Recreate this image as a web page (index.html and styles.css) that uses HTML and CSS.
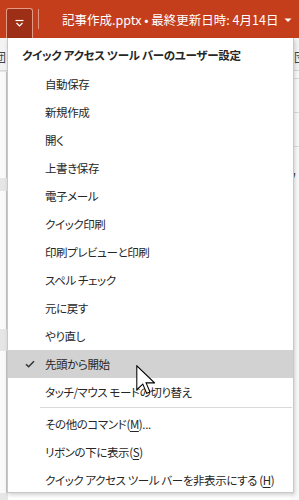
FILE: index.html
```html
<!DOCTYPE html>
<html lang="ja">
<head>
<meta charset="utf-8">
<link rel="stylesheet" href="styles.css">
</head>
<body>
<div class="app">
  <header class="titlebar">
    <div class="qat-btn">
      <svg width="11" height="8" viewBox="0 0 11 8"><path d="M1.5 1.5h8" stroke="#fff" stroke-width="1.2"/><path d="M2.5 4l3 3 3-3" fill="none" stroke="#fff" stroke-width="1.2"/></svg>
    </div>
    <div class="tb-sep"></div>
    <div class="doc-title">記事作成.pptx • 最終更新日時: 4月14日</div>
    <svg class="tb-caret" width="8" height="5" viewBox="0 0 8 5"><path d="M0.5 0.5l3.5 3.5 3.5-3.5z" fill="#fff"/></svg>
  </header>
  <div class="workspace">
    <div class="ribbon">
      <span class="rb-l">団</span>
      <span class="rb-r">団</span>
    </div>
    <div class="main">
      <div class="thumbs">
        <div class="thumb t1"></div>
        <div class="thumb t2"></div>
        <div class="thumb t3"></div>
      </div>
      <div class="canvas"></div>
      <div class="pane">
        <div class="pane-row"></div>
        <div class="pane-row"></div>
        <div class="pr-text">フ</div>
      </div>
    </div>
  </div>

  <div class="menu">
    <div class="menu-head">クイック アクセス ツール バーのユーザー設定</div>
    <div class="item">自動保存</div>
    <div class="item">新規作成</div>
    <div class="item">開く</div>
    <div class="item">上書き保存</div>
    <div class="item">電子メール</div>
    <div class="item">クイック印刷</div>
    <div class="item">印刷プレビューと印刷</div>
    <div class="item">スペル チェック</div>
    <div class="item">元に戻す</div>
    <div class="item">やり直し</div>
    <div class="item checked hover">
      <svg class="check" width="10" height="8" viewBox="0 0 10 8"><path d="M1 4.2l2.6 2.6L9 1.2" fill="none" stroke="#333" stroke-width="1.5"/></svg>
      先頭から開始
    </div>
    <div class="item">タッチ/マウス モードの切り替え</div>
    <div class="menu-sep"></div>
    <div class="item">その他のコマンド(<u>M</u>)...</div>
    <div class="item">リボンの下に表示(<u>S</u>)</div>
    <div class="item">クイック アクセス ツール バーを非表示にする (<u>H</u>)</div>
  </div>

  <svg class="cursor" width="19" height="30" viewBox="0 0 12.6 20"><path d="M0.5 0.5v16l4-3.8 2.6 6.2 2.2-0.9-2.6-6.1h5.6z" fill="#fff" stroke="#000" stroke-width="0.7" stroke-linejoin="miter"/></svg>
</div>
</body>
</html>
```
FILE: styles.css
```css
* { box-sizing: border-box; }
html, body { margin: 0; padding: 0; }
body {
  width: 299px;
  height: 500px;
  overflow: hidden;
  font-family: "Noto Sans CJK JP", "Noto Sans", sans-serif;
  background: #e9e9e9;
}
.app { position: relative; width: 299px; height: 500px; }

.titlebar {
  height: 38px;
  background: #c43e1c;
  display: flex;
  align-items: center;
  color: #fff;
}
.titlebar > * { flex-shrink: 0; }
.qat-btn {
  margin-left: 6px;
  margin-top: 8px;
  width: 27px;
  height: 30px;
  border: 1px solid #e59a86;
  border-bottom: none;
  border-radius: 3px 3px 0 0;
  background: #9c2f15;
  display: flex;
  align-items: center;
  justify-content: center;
  padding-bottom: 1px;
}
.tb-sep {
  width: 1px;
  height: 20px;
  background: rgba(255,255,255,0.45);
  margin-left: 5px;
}
.doc-title {
  margin-left: 23px;
  font-size: 12.5px;
  font-feature-settings: "palt";
  white-space: nowrap;
  margin-top: 1px;
}
.tb-caret { margin-left: 6px; margin-top: 3px; }

.workspace { height: 462px; display: flex; flex-direction: column; }
.ribbon {
  height: 33px;
  background: #f3f3f3;
  border-bottom: 1px solid #d6d6d6;
  display: flex;
  justify-content: space-between;
  align-items: center;
  font-size: 12px;
  color: #444;
  padding-top: 5px;
  overflow: hidden;
}
.rb-l { margin-left: -6px; }
.rb-r { margin-right: -7px; }
.main { flex: 1; display: flex; background: #fff; }
.thumbs {
  width: 8px;
  background: #e6e6e6;
  display: flex;
  flex-direction: column;
  padding-top: 1px;
}
.thumb { background: #fafafa; border-right: 1px solid #c4c4c4; width: 7px; }
.t1 { height: 106px; margin-bottom: 13px; }
.t2 { height: 138px; margin-bottom: 22px; }
.t3 { height: 142px; }
.canvas { flex: 1; }
.pane { width: 8px; background: #fafafa; display: flex; flex-direction: column; padding-top: 7px; overflow: hidden; }
.pane-row { height: 34px; border-top: 1px solid #dcdcdc; }
.pr-text { font-size: 12px; color: #444; line-height: 60px; margin-left: -6px; border-top: 1px solid #dcdcdc; }

.menu {
  position: absolute;
  left: 7px;
  top: 38px;
  width: 287px;
  height: 455px;
  background: #fff;
  border: 1px solid #c8c8c8;
  border-top: none;
  box-shadow: 1px 2px 4px rgba(0,0,0,0.18);
  font-size: 11.5px;
  letter-spacing: -0.4px;
  color: #262626;
  font-feature-settings: "palt";
}
.menu-head {
  height: 32px;
  line-height: 32px;
  padding-left: 14px;
  padding-top: 1px;
  font-weight: bold;
  letter-spacing: -0.3px;
  white-space: nowrap;
}
.item {
  position: relative;
  height: 28px;
  line-height: 28px;
  padding-left: 37px;
  white-space: nowrap;
}
.item u { text-underline-offset: 2px; }
.item.hover { background: #d2d2d2; }
.check { position: absolute; left: 17px; top: 10px; }
.menu-sep {
  height: 3px;
  margin-left: 32px;
  margin-right: 1px;
  border-top: 1px solid #d9d9d9;
  margin-top: 1px;
}
.cursor { position: absolute; left: 136px; top: 365px; }
```
